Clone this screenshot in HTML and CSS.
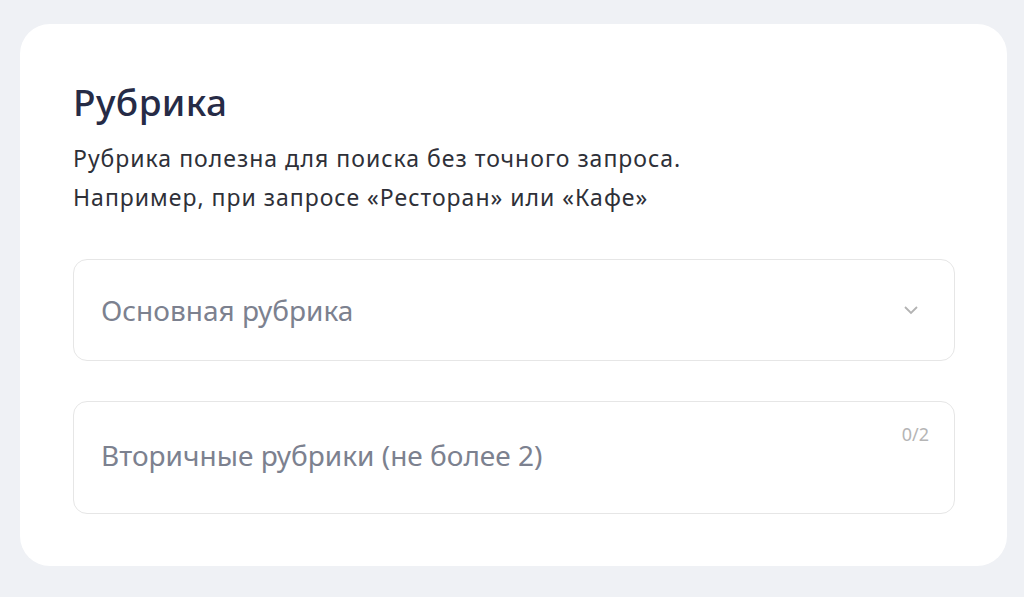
FILE: index.html
```html
<!DOCTYPE html>
<html lang="ru">
<head>
    <meta charset="UTF-8">
    <meta name="viewport" content="width=device-width, initial-scale=1.0">
    <title>Рубрика</title>
    <link rel="stylesheet" href="styles.css">
</head>
<body>

<div class="card">
    <h1>Рубрика</h1>
    <p class="hint">Рубрика полезна для поиска без точного запроса.<br>Например, при запросе «Ресторан» или «Кафе»</p>

    <div class="field select-field">
        <span class="placeholder">Основная рубрика</span>
        <svg class="chevron" width="16" height="10" viewBox="0 0 16 10">
            <path d="M2 2 L8 8 L14 2" fill="none" stroke="#b3b3b3" stroke-width="1.8"/>
        </svg>
    </div>

    <div class="field multi-field">
        <span class="placeholder">Вторичные рубрики (не более 2)</span>
        <span class="counter">0/2</span>
    </div>
</div>

</body>
</html>
```

FILE: styles.css
```css
* {
    box-sizing: border-box;
    margin: 0;
    padding: 0;
    font-family: "Noto Sans", Arial, sans-serif;
}

body {
    background: #eff1f5;
    padding: 24px 17px 31px 20px;
    height: 597px;
}

.card {
    background: #fff;
    border-radius: 30px;
    padding: 55px 52px 53px 53px;
    height: 542px;
}

h1 {
    color: #262b46;
    font-size: 37px;
    font-weight: 500;
    line-height: 46px;
    letter-spacing: 0.4px;
    margin-bottom: 14px;
}

.hint {
    color: #2e3038;
    font-size: 23px;
    line-height: 39px;
    letter-spacing: 1px;
    margin-bottom: 42px;
}

.field {
    position: relative;
    border: 1px solid #e6e6e6;
    border-radius: 14px;
    display: flex;
    align-items: center;
    padding: 0 27px;
}

.select-field {
    height: 102px;
    margin-bottom: 40px;
    justify-content: space-between;
}

.multi-field {
    height: 113px;
    padding-bottom: 5px;
}

.placeholder {
    color: #7c818f;
    font-size: 28px;
}

.chevron {
    margin-right: 8px;
}

.counter {
    position: absolute;
    top: 20px;
    right: 25px;
    color: #b5b5b5;
    font-size: 18px;
}
```
